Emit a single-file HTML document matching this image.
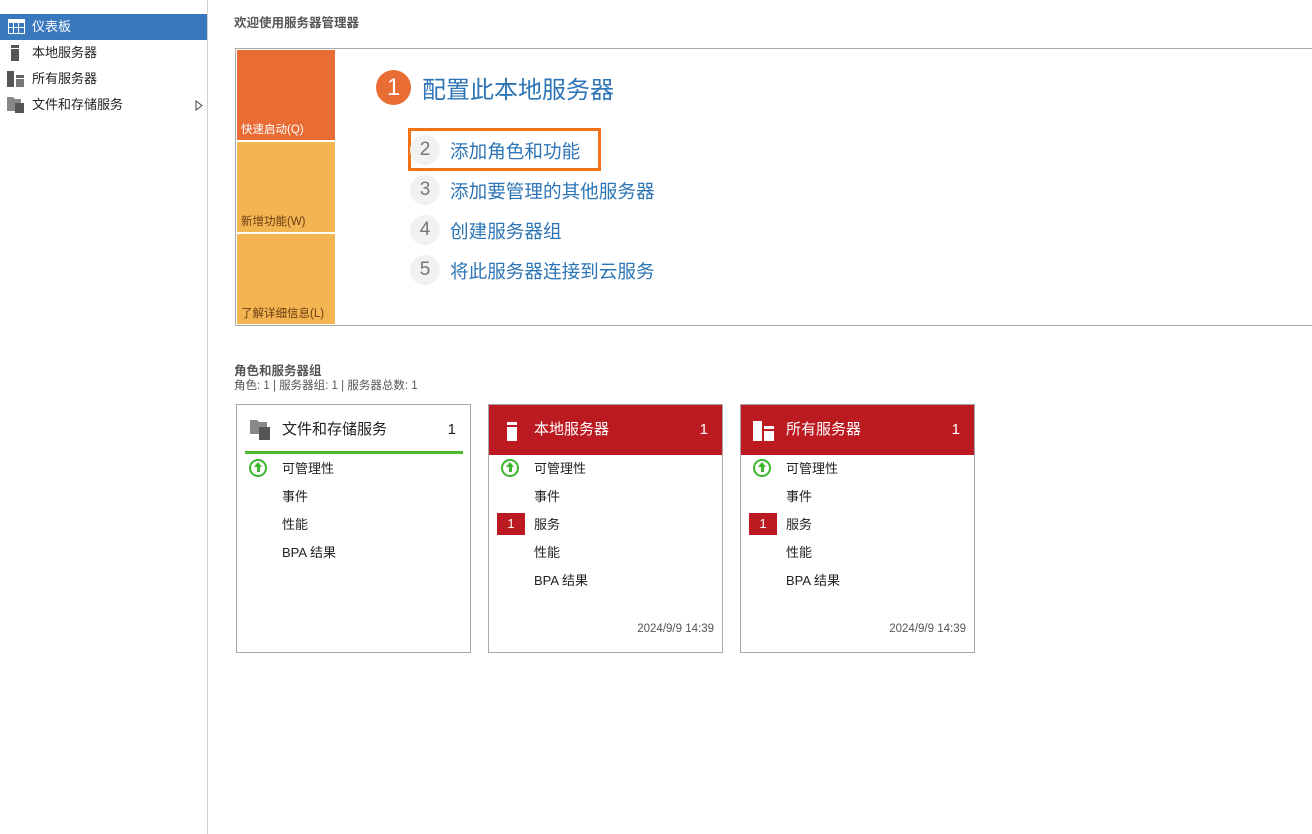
<!DOCTYPE html>
<html><head><meta charset="utf-8"><style>
*{margin:0;padding:0;box-sizing:border-box}
body{width:1312px;height:834px;background:#fff;font-family:"Liberation Sans","Noto Sans CJK SC",sans-serif;position:relative;overflow:hidden;color:#222}
.a{position:absolute}
.side{left:0;top:0;width:208px;height:834px;border-right:1px solid #d0d0d0}
.nav{position:absolute;left:0;width:207px;height:26px;font-size:13px;line-height:26px;padding-left:32px}
.sel{background:#3a78bd;color:#fff}
.tile{position:absolute;left:237px;width:98px;font-size:11.5px;padding:0 0 3px 4px;display:flex;align-items:flex-end}
.num{position:absolute;width:30px;height:30px;border-radius:50%;background:#f1f1f1;color:#777;font-size:19px;text-align:center;line-height:30px}
.lk{position:absolute;color:#2e75b6;font-size:18.6px}
.card{position:absolute;top:404px;width:235px;height:249px;border:1px solid #a8a8a8}
.hd{position:absolute;left:0;top:0;width:233px;height:50px;font-size:15px;line-height:50px;padding-left:45px}
.red{background:#bb1a20;color:#fff}
.hd .n{position:absolute;right:14px;top:0}
.it{position:absolute;left:45px;font-size:13px}
.up{position:absolute;left:12px;width:18px;height:18px;border:2px solid #3cb52f;border-radius:50%}
.up:after{content:"";position:absolute;left:3px;top:1px;border-left:4px solid transparent;border-right:4px solid transparent;border-bottom:5px solid #3cb52f}
.up:before{content:"";position:absolute;left:5.5px;top:5px;width:3px;height:6px;background:#3cb52f}
.bd{position:absolute;left:8px;width:28px;height:22px;background:#bb1a20;color:#fff;font-size:13px;text-align:center;line-height:22px}
.dt{position:absolute;right:8px;top:218px;font-size:11.5px;color:#555}
</style></head><body>
<div class="a side"></div>
<div class="nav sel" style="top:14px">仪表板</div>
<svg class="a" style="left:8px;top:19px" width="17" height="15"><rect width="17" height="15" fill="#fff"/><g fill="#3a78bd"><rect x="1" y="4" width="4" height="4"/><rect x="6" y="4" width="4" height="4"/><rect x="11" y="4" width="5" height="4"/><rect x="1" y="9" width="4" height="5"/><rect x="6" y="9" width="4" height="5"/><rect x="11" y="9" width="5" height="5"/></g></svg>
<div class="nav" style="top:40px">本地服务器</div>
<svg class="a" style="left:11px;top:45px" width="8" height="16"><rect width="8" height="3" fill="#555"/><rect y="4" width="8" height="12" fill="#555"/></svg>
<div class="nav" style="top:66px">所有服务器</div>
<svg class="a" style="left:7px;top:71px" width="17" height="16"><rect width="7" height="16" fill="#555"/><rect x="9" y="4" width="8" height="3" fill="#666"/><rect x="9" y="8" width="8" height="8" fill="#777"/></svg>
<div class="nav" style="top:92px">文件和存储服务</div>
<svg class="a" style="left:7px;top:97px" width="18" height="16"><path d="M0 0h6l2 2h6v12H0z" fill="#888"/><rect x="8" y="6" width="9" height="10" fill="#555"/></svg>
<svg class="a" style="left:195px;top:100px" width="8" height="11"><path d="M1 1L7 5.5L1 10Z" fill="none" stroke="#444"/></svg>

<div class="a" style="left:234px;top:12px;font-size:12.5px;font-weight:bold;color:#555">欢迎使用服务器管理器</div>
<div class="a" style="left:235px;top:48px;width:1090px;height:278px;border:1px solid #aaa"></div>
<div class="tile" style="top:50px;height:90px;background:#e86c34;color:#fff">快速启动(Q)</div>
<div class="tile" style="top:142px;height:90px;background:#f3b452;color:#6b3c10">新增功能(W)</div>
<div class="tile" style="top:234px;height:90px;background:#f3b452;color:#6b3c10">了解详细信息(L)</div>
<div class="a" style="left:376px;top:70px;width:35px;height:35px;border-radius:50%;background:#e86c34;color:#fff;font-size:24px;text-align:center;line-height:35px">1</div>
<div class="lk" style="left:422px;top:70px;font-size:24px">配置此本地服务器</div>
<div class="a" style="left:408px;top:128px;width:193px;height:43px;border:3px solid #f47216"></div>
<div class="num" style="left:410px;top:135px">2</div><div class="lk" style="left:450px;top:137px">添加角色和功能</div>
<div class="num" style="left:410px;top:175px">3</div><div class="lk" style="left:450px;top:177px">添加要管理的其他服务器</div>
<div class="num" style="left:410px;top:215px">4</div><div class="lk" style="left:450px;top:217px">创建服务器组</div>
<div class="num" style="left:410px;top:255px">5</div><div class="lk" style="left:450px;top:257px">将此服务器连接到云服务</div>

<div class="a" style="left:234px;top:360px;font-size:12.5px;font-weight:bold;color:#555">角色和服务器组</div>
<div class="a" style="left:234px;top:377px;font-size:11.5px;color:#555">角色: 1 | 服务器组: 1 | 服务器总数: 1</div>

<div class="card" style="left:236px">
<div class="hd">文件和存储服务<span class="n">1</span></div>
<svg class="a" style="left:13px;top:15px" width="21" height="21"><path d="M0 0h7l2 2h8v12H0z" fill="#888"/><rect x="9" y="7" width="11" height="13" fill="#555"/></svg>
<div class="a" style="left:8px;top:46px;width:218px;height:3px;background:#4cba2a"></div>
<div class="up" style="top:54px"></div><div class="it" style="top:53px">可管理性</div>
<div class="it" style="top:81px">事件</div><div class="it" style="top:109px">性能</div><div class="it" style="top:137px">BPA 结果</div>
</div>
<div class="card" style="left:488px">
<div class="hd red">本地服务器<span class="n">1</span></div>
<svg class="a" style="left:18px;top:17px" width="10" height="19"><rect width="10" height="3" fill="#fff"/><rect y="5" width="10" height="14" fill="#fff"/></svg>
<div class="up" style="top:54px"></div><div class="it" style="top:53px">可管理性</div>
<div class="it" style="top:81px">事件</div><div class="bd" style="top:108px">1</div><div class="it" style="top:109px">服务</div><div class="it" style="top:137px">性能</div><div class="it" style="top:165px">BPA 结果</div>
<div class="dt">2024/9/9 14:39</div>
</div>
<div class="card" style="left:740px">
<div class="hd red">所有服务器<span class="n">1</span></div>
<svg class="a" style="left:12px;top:16px" width="22" height="20"><rect width="9" height="20" fill="#fff"/><rect x="11" y="5" width="10" height="3" fill="#fff"/><rect x="11" y="10" width="10" height="10" fill="#fff"/></svg>
<div class="up" style="top:54px"></div><div class="it" style="top:53px">可管理性</div>
<div class="it" style="top:81px">事件</div><div class="bd" style="top:108px">1</div><div class="it" style="top:109px">服务</div><div class="it" style="top:137px">性能</div><div class="it" style="top:165px">BPA 结果</div>
<div class="dt">2024/9/9 14:39</div>
</div>
</body></html>
